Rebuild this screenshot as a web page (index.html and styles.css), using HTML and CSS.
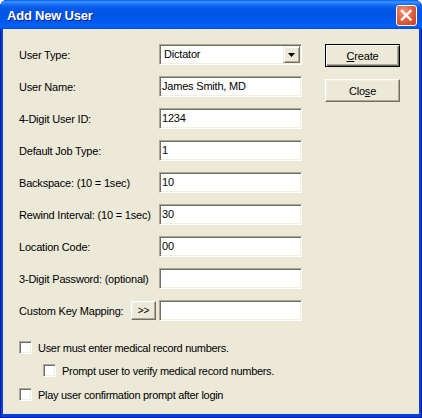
FILE: index.html
```html
<!DOCTYPE html>
<html>
<head>
<meta charset="utf-8">
<title>Add New User</title>
<link rel="stylesheet" href="styles.css">
</head>
<body>
<div class="window">
  <div class="titlebar">
    <span class="title">Add New User</span>
    <span class="close-x">
      <svg width="19" height="19" viewBox="0 0 19 19"><path d="M5 5 L13.5 13.5 M13.5 5 L5 13.5" stroke="#fff" stroke-width="2.4" stroke-linecap="square"/></svg>
    </span>
  </div>
  <div class="client">
    <div class="form">
      <div class="row">
        <span class="label">User Type:</span>
        <div class="combo">
          <span class="combo-text">Dictator</span>
          <span class="drop"><svg width="7" height="4" viewBox="0 0 7 4"><path d="M0 0 H7 L3.5 4 Z" fill="#000"/></svg></span>
        </div>
      </div>
      <div class="row"><span class="label">User Name:</span><div class="field">James Smith, MD</div></div>
      <div class="row"><span class="label">4-Digit User ID:</span><div class="field">1234</div></div>
      <div class="row"><span class="label">Default Job Type:</span><div class="field">1</div></div>
      <div class="row"><span class="label">Backspace: (10 = 1sec)</span><div class="field">10</div></div>
      <div class="row"><span class="label">Rewind Interval: (10 = 1sec)</span><div class="field">30</div></div>
      <div class="row"><span class="label">Location Code:</span><div class="field">00</div></div>
      <div class="row"><span class="label">3-Digit Password: (optional)</span><div class="field"></div></div>
      <div class="row">
        <span class="label label-short">Custom Key Mapping:</span>
        <span class="btn btn-small">&gt;&gt;</span>
        <div class="field"></div>
      </div>
      <div class="checks">
        <div class="check"><span class="box"></span><span>User must enter medical record numbers.</span></div>
        <div class="check check-indent"><span class="box"></span><span>Prompt user to verify medical record numbers.</span></div>
        <div class="check check-last"><span class="box"></span><span>Play user confirmation prompt after login</span></div>
      </div>
    </div>
    <div class="actions">
      <div class="btn btn-default"><span><u>C</u>reate</span></div>
      <div class="btn"><span>Clo<u>s</u>e</span></div>
    </div>
  </div>
</div>
</body>
</html>
```

FILE: styles.css
```css
html, body {
  margin: 0;
  padding: 0;
  background: #ffffff;
}

body {
  font-family: "Liberation Sans", Arial, sans-serif;
  font-size: 11px;
  letter-spacing: -0.2px;
  color: #000;
}

.window {
  width: 422px;
  height: 418px;
  box-sizing: border-box;
  display: flex;
  flex-direction: column;
  background: #0842d6;
  border-radius: 7px 7px 0 0;
  box-shadow: inset 0 0 0 1px #0019a8;
  overflow: hidden;
}

.titlebar {
  height: 29px;
  flex: none;
  display: flex;
  align-items: center;
  padding: 0 5px 0 7px;
  box-sizing: border-box;
  background: linear-gradient(to bottom,
    #0a5fef 0px, #3d95ff 2px, #1a74f8 4px, #0659ea 8px,
    #0054e3 14px, #0058ee 22px, #0562f6 26px, #0050e0 29px);
  border-radius: 7px 7px 0 0;
}

.title {
  color: #fff;
  font-weight: bold;
  font-size: 13px;
  letter-spacing: -0.2px;
  text-shadow: 1px 1px 0 #0a1e8a;
  margin-top: 1px;
}

.close-x {
  margin-left: auto;
  margin-top: 2px;
  width: 21px;
  height: 21px;
  box-sizing: border-box;
  border: 1px solid #fff;
  border-radius: 3px;
  background: radial-gradient(circle at 35% 30%, #f09a7e 0, #e2613f 45%, #c9401f 100%);
  display: flex;
  align-items: center;
  justify-content: center;
}

.client {
  flex: 1;
  margin: 0 3px 4px 3px;
  background: #ece9d8;
  display: flex;
  align-items: flex-start;
  padding: 15px 0 0 16px;
}

.form {
  width: 283px;
  display: flex;
  flex-direction: column;
}

.row {
  display: flex;
  align-items: center;
  height: 21px;
  margin-bottom: 11px;
}

.row:nth-last-child(2) {
  margin-bottom: 0;
}

.label {
  width: 140px;
  flex: none;
  white-space: nowrap;
  padding-top: 1px;
}

.label-short {
  width: 112px;
}

.field {
  width: 143px;
  height: 21px;
  box-sizing: border-box;
  flex: none;
  background: #fff;
  border: 1px solid;
  border-color: #aca899 #fff #fff #aca899;
  box-shadow: inset 1px 1px 0 #716f64, inset -1px -1px 0 #f1efe2;
  padding: 0 0 0 2px;
  line-height: 18px;
  white-space: nowrap;
}

.combo {
  width: 143px;
  height: 21px;
  box-sizing: border-box;
  flex: none;
  display: flex;
  align-items: center;
  background: #fff;
  border: 1px solid;
  border-color: #aca899 #fff #fff #aca899;
  box-shadow: inset 1px 1px 0 #716f64, inset -1px -1px 0 #f1efe2;
  padding: 1px;
}

.combo-text {
  flex: 1;
  padding-left: 3px;
  line-height: 17px;
}

.drop {
  width: 17px;
  height: 17px;
  box-sizing: border-box;
  display: flex;
  align-items: center;
  justify-content: center;
  background: #ece9d8;
  border: 1px solid;
  border-color: #f1efe2 #716f64 #716f64 #f1efe2;
  box-shadow: inset 1px 1px 0 #fff, inset -1px -1px 0 #aca899;
}

.btn {
  width: 75px;
  height: 23px;
  box-sizing: border-box;
  display: flex;
  align-items: center;
  justify-content: center;
  background: #ece9d8;
  border: 1px solid;
  border-color: #fff #716f64 #716f64 #fff;
  box-shadow: inset -1px -1px 0 #aca899, inset 1px 1px 0 #f1efe2;
}

.btn-default {
  border: 1px solid #000;
  box-shadow: inset 1px 1px 0 #fff, inset -1px -1px 0 #716f64, inset -2px -2px 0 #aca899;
}

.btn-small {
  width: 25px;
  height: 19px;
  flex: none;
  margin-right: 3px;
  padding-bottom: 1px;
  font-size: 10px;
}

.actions {
  margin-left: 23px;
  display: flex;
  flex-direction: column;
  gap: 12px;
}

.actions .btn span {
  padding-top: 1px;
}

.checks {
  display: flex;
  flex-direction: column;
  margin-top: 20px;
  letter-spacing: -0.3px;
}

.check {
  display: flex;
  align-items: center;
  height: 13px;
  gap: 6px;
  white-space: nowrap;
}

.check + .check {
  margin-top: 10px;
}

.check-last {
  margin-top: 11px !important;
}

.check-indent {
  margin-left: 24px;
}

.box {
  width: 13px;
  height: 13px;
  box-sizing: border-box;
  flex: none;
  background: #fff;
  border: 1px solid;
  border-color: #aca899 #fff #fff #aca899;
  box-shadow: inset 1px 1px 0 #716f64, inset -1px -1px 0 #f1efe2;
}
```
